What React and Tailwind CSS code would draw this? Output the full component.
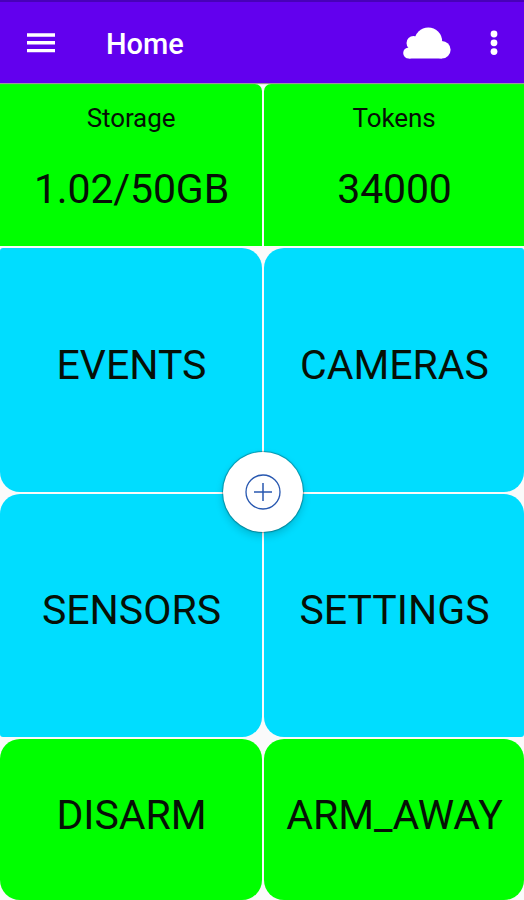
const stats = [
  { label: "Storage", value: "1.02/50GB", shape: "rounded-tr-[7px]" },
  { label: "Tokens", value: "34000", shape: "rounded-tl-[7px]" },
];

const sections = [
  { name: "EVENTS", shape: "rounded-[20px] rounded-tl-[3px]" },
  { name: "CAMERAS", shape: "rounded-[20px] rounded-tr-[3px]" },
  { name: "SENSORS", shape: "rounded-[20px] rounded-bl-[3px]" },
  { name: "SETTINGS", shape: "rounded-[20px] rounded-br-[3px]" },
];

const modes = ["DISARM", "ARM_AWAY"];

function Header() {
  return (
    <header className="relative z-10 flex h-[83px] shrink-0 items-center border-t-2 border-[#4800b8] bg-[#6200ee] pt-px text-white shadow-[0_1px_1px_#999]">
      <button className="ml-[27px] flex h-5 w-7 items-center" aria-label="Menu">
        <svg width="28" height="20" viewBox="0 0 28 20" fill="currentColor">
          <path d="M0 .3h28v3.4H0zM0 8.1h28v3.4H0zM0 15.9h28v3.4H0z" />
        </svg>
      </button>
      <h1 className="mt-[2px] ml-[51px] text-[29px] leading-8 font-medium">Home</h1>
      <svg className="ml-auto" width="48" height="32" viewBox="0 0 48 32" fill="currentColor">
        <circle cx="10.5" cy="16" r="7" />
        <circle cx="25.3" cy="14.3" r="13.8" />
        <circle cx="38.8" cy="22.8" r="8.8" />
        <circle cx="5.8" cy="26" r="5.6" />
        <path d="M5.8 20h33v11.6h-33z" />
      </svg>
      <button className="mr-[26px] ml-[39px]" aria-label="More options">
        <svg width="8" height="26" viewBox="0 0 8 26" fill="currentColor">
          <circle cx="4" cy="4" r="3.4" />
          <circle cx="4" cy="12.8" r="3.4" />
          <circle cx="4" cy="21.6" r="3.4" />
        </svg>
      </button>
    </header>
  );
}

export default function App() {
  return (
    <div className="relative flex h-[900px] w-[524px] flex-col overflow-hidden bg-[#fafafa] font-['Roboto',sans-serif] text-[#061006]">
      <Header />

      <main className="grid flex-1 grid-cols-[262px_260px] grid-rows-[162px_243.5px_243.5px_161px] gap-[2px] pt-px">
        {/* Usage */}
        {stats.map((stat) => (
          <div key={stat.label} className={`flex flex-col items-center bg-[#00ff00] pt-[18px] ${stat.shape}`}>
            <p className="text-[26px] leading-8 tracking-[-0.1px]">{stat.label}</p>
            <p className="mt-[29px] pl-px text-[41px] leading-[52px] tracking-[-0.15px]">{stat.value}</p>
          </div>
        ))}

        {/* Sections */}
        {sections.map((section) => (
          <button
            key={section.name}
            className={`flex items-center justify-center bg-[#00ddff] pb-[9px] pl-px text-[41px] ${section.shape}`}
          >
            {section.name}
          </button>
        ))}

        {/* Alarm modes */}
        {modes.map((mode) => (
          <button
            key={mode}
            className="flex items-center justify-center rounded-[20px] bg-[#00ff00] pb-[8px] pl-px text-[41px]"
          >
            {mode}
          </button>
        ))}
      </main>

      {/* Add button */}
      <button
        className="absolute top-[452px] left-[223px] flex size-[80px] items-center justify-center rounded-full bg-white text-[#2858b0] shadow-[0_0_1px_1px_rgba(0,0,0,0.3),0_4px_8px_rgba(0,0,0,0.18)]"
        aria-label="Add"
      >
        <svg width="36" height="36" viewBox="0 0 36 36" fill="none" stroke="currentColor">
          <circle cx="18" cy="18" r="17" strokeWidth="1.3" />
          <path d="M9 18h18M18 9v18" strokeWidth="1.5" />
        </svg>
      </button>
    </div>
  );
}
